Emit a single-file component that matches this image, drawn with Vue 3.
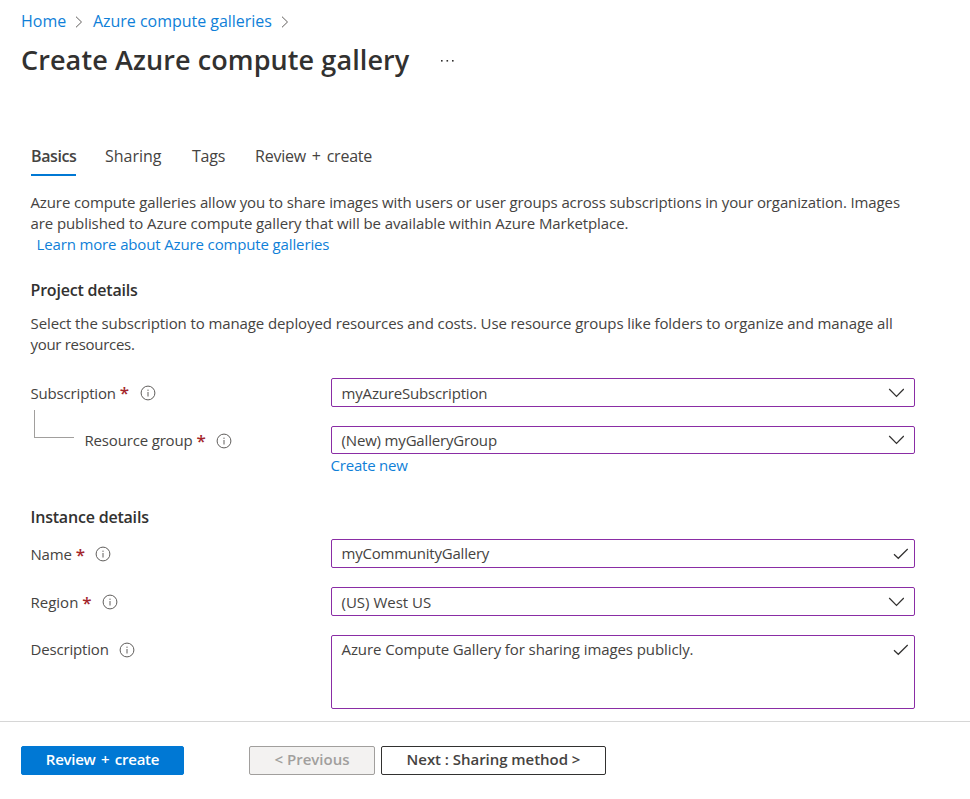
<script setup>
import { ref } from 'vue'

const tabs = [
  { id: 'basics', label: 'Basics' },
  { id: 'sharing', label: 'Sharing' },
  { id: 'tags', label: 'Tags' },
  { id: 'review', label: 'Review + create' },
]
const active = ref('basics')

const projectFields = [
  { id: 'subscription', label: 'Subscription', required: true, icon: 'chevron', value: 'myAzureSubscription' },
  { id: 'group', label: 'Resource group', required: true, icon: 'chevron', value: '(New) myGalleryGroup' },
]
const instanceFields = [
  { id: 'name', label: 'Name', required: true, icon: 'check', value: 'myCommunityGallery' },
  { id: 'region', label: 'Region', required: true, icon: 'chevron', value: '(US) West US' },
  { id: 'description', label: 'Description', required: false, icon: 'check', value: 'Azure Compute Gallery for sharing images publicly.' },
]
const groups = [
  { id: 'project', fields: projectFields },
  { id: 'instance', fields: instanceFields },
]
</script>

<template>
  <div class="page">
    <nav class="crumbs">
      <a class="home">Home</a>
      <svg class="sep" viewBox="0 0 8 12"><path d="M1 .7l5.5 5.3L1 11.3" /></svg>
      <a class="parent">Azure compute galleries</a>
      <svg class="sep" viewBox="0 0 8 12"><path d="M1 .7l5.5 5.3L1 11.3" /></svg>
    </nav>

    <header class="heading">
      <h1>Create Azure compute gallery</h1>
      <svg class="more" viewBox="0 0 15 4">
        <rect x="1" y="1" width="1.6" height="1.6" />
        <rect x="6.5" y="1" width="1.6" height="1.6" />
        <rect x="12" y="1" width="1.6" height="1.6" />
      </svg>
    </header>

    <div class="tabs">
      <button v-for="t in tabs" :key="t.id" :class="['tab', t.id, { active: active === t.id }]" @click="active = t.id">
        {{ t.label }}
      </button>
    </div>

    <div class="intro">
      <div class="line a">Azure compute galleries allow you to share images with users or user groups across subscriptions in your organization. Images</div>
      <div class="line b">are published to Azure compute gallery that will be available within Azure Marketplace.</div>
      <a class="line learn">Learn more about Azure compute galleries</a>
    </div>

    <section v-for="g in groups" :key="g.id" :class="['section', g.id]">
      <template v-if="g.id === 'project'">
        <h2>Project details</h2>
        <div class="note">
          <div class="line c">Select the subscription to manage deployed resources and costs. Use resource groups like folders to organize and manage all</div>
          <div class="line d">your resources.</div>
        </div>
      </template>
      <h2 v-else>Instance details</h2>

      <div class="fields">
        <div v-for="f in g.fields" :key="f.id" :class="['row', f.id]">
          <div class="label">
            <span v-if="f.id === 'group'" class="elbow"></span>
            <span class="text">{{ f.label }}</span>
            <span v-if="f.required" class="star">*</span>
            <svg class="info" viewBox="0 0 16 16">
              <circle cx="8" cy="8" r="6.9" />
              <path d="M8 7v4.5M8 4.6v1.3" />
            </svg>
          </div>
          <div class="box">
            <span class="value">{{ f.value }}</span>
            <svg v-if="f.icon === 'chevron'" class="chevron" viewBox="0 0 16 10"><path d="M1.2 1l7.3 7.4L15.8 1" /></svg>
            <svg v-else class="check" viewBox="0 0 16 12"><path d="M1 6.2l4.3 4.1L14.7 1" /></svg>
          </div>
        </div>
      </div>
      <a v-if="g.id === 'project'" class="create">Create new</a>
    </section>

    <footer class="footer">
      <button class="btn primary">Review + create</button>
      <button class="btn prev" disabled>&lt; Previous</button>
      <button class="btn next">Next : Sharing method &gt;</button>
    </footer>
  </div>
</template>

<style>
body {
  background: #fff;
}
</style>

<style scoped>
.page {
  width: 970px;
  height: 799px;
  box-sizing: border-box;
  display: flex;
  flex-direction: column;
  overflow: hidden;
  background: #fff;
  color: #454341;
  font-family: "Open Sans", "Noto Sans", sans-serif;
  font-size: 15px;
  line-height: 21px;
  white-space: nowrap;
}
svg { fill: none; stroke: #323130; flex: none; display: block; }
a { color: #0f7fd8; }
h1, h2 { margin: 0; font-weight: 600; color: #323130; }
button { font: inherit; color: inherit; margin: 0; padding: 0; background: none; border: 0; }

.crumbs { display: flex; align-items: center; height: 21px; margin: 11px 0 0 21px; font-size: 16px; }
.sep { width: 8px; height: 12px; stroke: #605e5c; }
.home { width: 45px; margin-right: 9px; }
.parent { width: 179px; margin: 0 9px 0 10px; letter-spacing: -0.03px; }

.heading { display: flex; align-items: center; height: 40px; margin: 8px 0 0 21px; }
h1 { width: 389px; font-size: 27px; line-height: 40px; letter-spacing: 0.1px; }
.more { width: 15px; height: 4px; margin: 2px 0 0 30px; fill: #323130; stroke: none; }

.tabs { display: flex; height: 32px; margin: 64px 0 0 31px; }
.tab { height: 32px; padding: 2px 0 7px; border-bottom: 2px solid transparent; text-align: left; font-size: 16px; box-sizing: border-box; white-space: nowrap; }
.tab.active { border-color: #0078d4; font-weight: 600; letter-spacing: -0.4px; }
.basics { width: 45px; margin-right: 29px; }
.sharing { width: 56px; margin-right: 31px; }
.tags { width: 33px; margin-right: 30px; letter-spacing: -0.2px; }
.review { letter-spacing: -0.23px; word-spacing: 2px; }

.intro { margin: 16px 0 0 30.5px; }
.line { display: block; height: 21px; }
.a { letter-spacing: -0.115px; }
.b { letter-spacing: -0.09px; }
.c { letter-spacing: -0.1px; }
.d { letter-spacing: -0.3px; }
.learn { padding-left: 6px; letter-spacing: -0.14px; }

.section { margin-left: 30.5px; }
.project { margin-top: 24px; height: 197px; }
.instance { margin-top: 30px; }
h2 { font-size: 16px; line-height: 22px; letter-spacing: -0.2px; }
.note { margin-top: 12px; }
.fields { display: flex; flex-direction: column; gap: 19px; }
.project .fields { margin-top: 23px; }
.instance .fields { margin-top: 11px; }
.row { display: flex; height: 29px; }
.row.group { height: 28px; }
.row.description { height: 74px; }
.label { display: flex; align-items: center; width: 300.5px; height: 29px; letter-spacing: -0.17px; }
.box { display: flex; align-items: center; justify-content: space-between; width: 584px; box-sizing: border-box; border: 1px solid #8a2da5; border-radius: 2px; padding: 0 10px 0 9.5px; }
.description .box { align-items: flex-start; padding-top: 3px; }
.text, .value { letter-spacing: -0.17px; }
.name .value { letter-spacing: -0.22px; }
.description .value { letter-spacing: -0.09px; }
.region .value { letter-spacing: 0; }
.region .text { letter-spacing: 0; }
.subscription .text, .subscription .value, .region .value { padding-top: 2px; }
.name .label, .region .label { padding-top: 1px; box-sizing: border-box; }
.name .text, .region .text { padding-top: 1px; }
.star { margin-left: 4px; color: #a4262c; font-size: 17px; font-weight: 600; }
.info { width: 16px; height: 16px; margin-left: 10px; stroke: #605e5c; }
.subscription .info { margin-left: 10.5px; }
.elbow { width: 40px; height: 28px; margin: -34px 10.5px 0 3.5px; border-left: 1px solid #a19f9d; border-bottom: 1px solid #a19f9d; box-sizing: border-box; }
.chevron { width: 16px; height: 10px; stroke-width: 1.2; }
.check { width: 16px; height: 12px; margin-right: -5px; stroke-width: 1.2; }
.description .check { margin-top: 5px; }
.create { display: block; margin: 1px 0 0 300px; letter-spacing: -0.2px; }

.footer { display: flex; align-items: flex-start; height: 78px; margin-top: auto; padding: 24px 0 0 21px; box-sizing: border-box; border-top: 1px solid #d6d6d6; }
.btn { height: 29px; padding-bottom: 2px; box-sizing: border-box; border: 1px solid #323130; border-radius: 2px; font-weight: 600; }
.primary { width: 163px; background: #0078d4; border-color: #0078d4; color: #fff; letter-spacing: -0.25px; word-spacing: 1.8px; }
.prev { width: 126px; margin: 0 6px 0 65px; background: #f3f2f1; border-color: #a19f9d; color: #a19f9d; }
.next { width: 225px; letter-spacing: -0.04px; }
</style>
